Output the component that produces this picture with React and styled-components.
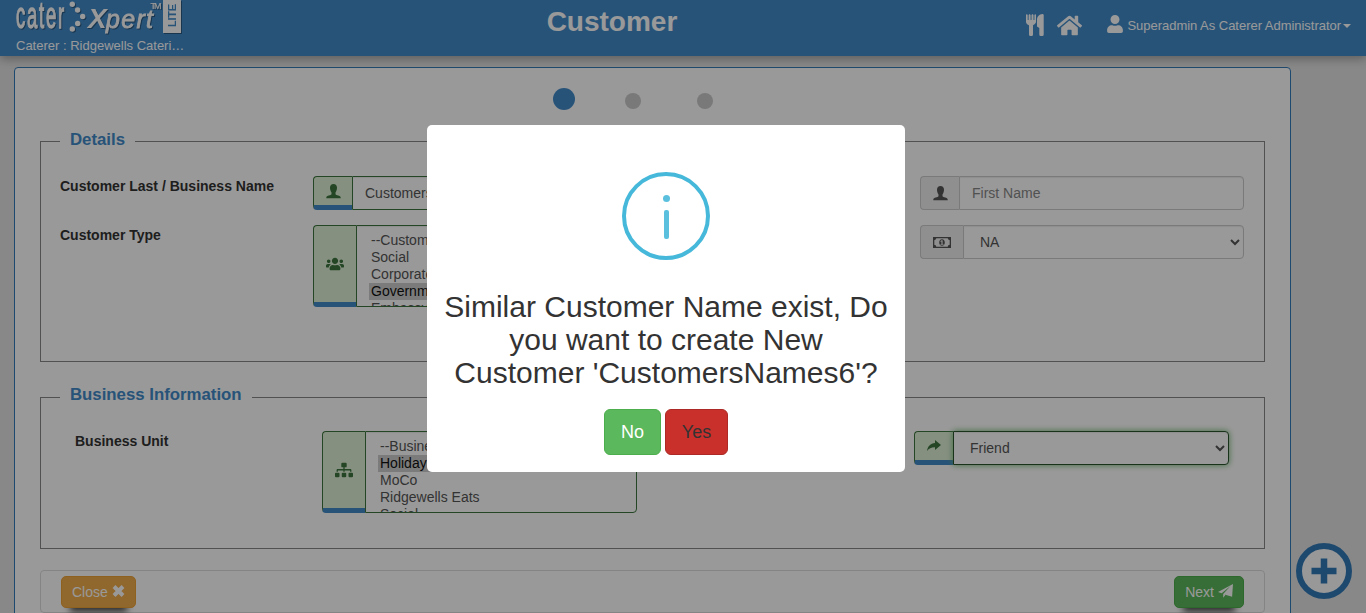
import React from "react";
import styled, { createGlobalStyle, css } from "styled-components";
import { FaHome, FaUser, FaUsers, FaSitemap } from "react-icons/fa";

const Global = createGlobalStyle`
  *, *::before, *::after { box-sizing: border-box; }
  html, body { margin: 0; height: 100%; overflow: hidden; }
  body {
    background: #e3e3e3;
    color: #333;
    font: 14px/20px "Liberation Sans", Arial, sans-serif;
  }
`;

const Page = styled.div`
  height: 613px;
  overflow: hidden;
`;

const Header = styled.header`
  position: relative;
  display: grid;
  grid-template-columns: 500px 224px 1fr;
  height: 56px;
  background: #428bca;
  color: #fff;
  box-shadow: 0 3px 9px rgba(0, 0, 0, 0.3);
`;

const Brand = styled.div`
  padding-left: 16px;
  font-size: 13px;
  line-height: 18px;
`;

const LogoSvg = styled.svg`
  display: block;
  width: 170px;
  height: 37px;
  filter: drop-shadow(1px 1px 0.6px rgba(0, 0, 0, 0.35));
`;

const Title = styled.h1`
  margin: 0;
  padding-top: 2px;
  font-size: 28px;
  line-height: 40px;
  text-align: center;
`;

const HeaderTools = styled.div`
  display: flex;
  justify-content: flex-end;
  align-items: center;
  gap: 12px;
  height: 50px;
  padding-right: 15px;
  font-size: 13px;
`;

const UserMenu = styled.div`
  display: flex;
  align-items: center;
  padding-top: 2px;
  margin-left: 12px;
  letter-spacing: -0.03px;
  white-space: nowrap;

  svg { margin: -5px 3px 0 0; }
`;

const Caret = styled.span`
  margin-left: 2px;
  border: 4px solid transparent;
  border-top-color: #fff;
  border-bottom: 0;
`;

const Panel = styled.main`
  width: 1277px;
  height: 600px;
  margin: 11px 0 0 14px;
  padding: 20px 25px 0;
  border: 1px solid #337ab7;
  border-radius: 4px;
  background: #fff;
`;

const Steps = styled.div`
  display: flex;
  align-items: flex-end;
  height: 22px;
  padding-left: 513px;
`;

const Step = styled.span`
  width: ${(p) => (p.$active ? 22 : 16)}px;
  height: ${(p) => (p.$active ? 22 : 16)}px;
  margin: ${(p) => (p.$active ? "0 50px 0 0" : "0 56px 1px 0")};
  border-radius: 50%;
  background: ${(p) => (p.$active ? "#428bca" : "#cacaca")};
`;

const Fieldset = styled.fieldset`
  height: ${(p) => p.$height}px;
  margin: ${(p) => p.$top}px 0 0;
  padding: ${(p) => p.$pad};
  border: 1px solid #888;
`;

const Legend = styled.legend`
  margin-left: ${(p) => p.$shift || 0}px;
  padding: 0 10px ${(p) => p.$drop}px;
  color: #428bca;
  font-size: 16.8px;
  font-weight: bold;
  line-height: 20px;
`;

const FieldGrid = styled.div`
  display: grid;
  grid-template-columns: ${(p) => p.$columns};
  row-gap: 15px;
  align-items: start;
`;

const Label = styled.label`
  color: #333;
  font-weight: bold;
`;

const Group = styled.div`
  display: flex;
  height: ${(p) => (p.$tall ? 82 : 34)}px;
`;

const Addon = styled.span`
  display: flex;
  flex: none;
  align-items: center;
  justify-content: center;
  width: ${(p) => (p.$wide ? 43 : 39)}px;
  border: 1px solid #ccc;
  border-right: 0;
  border-radius: 4px 0 0 4px;
  background: #eee;
  color: #555;

  ${(p) =>
    p.$valid &&
    css`
      border-color: #3c763d;
      border-bottom: 5px solid #428bca;
      background: #dff0d8;
      color: #3c763d;
    `}
`;

const control = css`
  flex: 1;
  min-width: 0;
  border: 1px solid ${(p) => (p.$focus ? "#2b542c" : p.$valid ? "#3c763d" : "#ccc")};
  border-radius: 0 4px 4px 0;
  background: #fff;
  color: #555;
  font: inherit;
  outline: 0;
  box-shadow: inset 0 1px 1px rgba(0, 0, 0, 0.075)${(p) => (p.$focus ? ", 0 0 6px #67b168" : "")};
`;

const Input = styled.input`
  ${control}
  padding: 6px 12px;
  &::placeholder { color: #888; }
`;

const Select = styled.select`
  ${control}
  padding: 6px 2px 6px 12px;
`;

const ListBox = styled.div`
  ${control}
  padding: 6px 12px 0;
  overflow: hidden;
  line-height: 17px;
`;

const ListOption = styled.div`
  padding: 0 2px;
  white-space: nowrap;
  ${(p) => p.$selected && css`background: #cecece; color: #101010;`}
`;

const Footer = styled.div`
  display: flex;
  justify-content: space-between;
  height: 43px;
  margin-top: 21px;
  padding: 5px 20px;
  border: 1px solid #ddd;
  border-radius: 4px;
`;

const Action = styled.button`
  display: flex;
  align-items: center;
  gap: 4px;
  height: 32px;
  padding: 0 10px;
  border: 1px solid ${(p) => (p.$kind === "next" ? "#4cae4c" : "#eea236")};
  border-radius: 5px;
  background: ${(p) => (p.$kind === "next" ? "#5cb85c" : "#f0ad4e")};
  color: #fff;
  font: 14px/20px "Liberation Sans", Arial, sans-serif;
  box-shadow: 0 13px 7px -9px rgba(0, 0, 0, 0.7);

  svg { margin-top: -2px; }
`;

const AddButton = styled.button`
  position: fixed;
  left: 1296px;
  top: 543px;
  display: flex;
  align-items: center;
  justify-content: center;
  width: 56px;
  height: 56px;
  padding: 0;
  border: 6px solid #337ab7;
  border-radius: 50%;
  background: #fdfdfd;
`;

const Overlay = styled.div`
  position: fixed;
  inset: 0;
  z-index: 10;
  background: rgba(0, 0, 0, 0.4);
`;

const Dialog = styled.div`
  position: fixed;
  left: 427px;
  top: 125px;
  z-index: 11;
  display: flex;
  flex-direction: column;
  align-items: center;
  width: 478px;
  height: 347px;
  padding-top: 47px;
  border-radius: 5px;
  background: #fff;
`;

const DialogText = styled.h2`
  margin: 30px 0 0;
  font-size: 30px;
  font-weight: normal;
  line-height: 33px;
  text-align: center;
  white-space: nowrap;
`;

const DialogActions = styled.div`
  display: flex;
  gap: 4px;
  margin-top: 20px;
`;

const DialogButton = styled.button`
  width: ${(p) => (p.$danger ? 63 : 57)}px;
  height: 46px;
  padding: 0;
  border: 1px solid ${(p) => (p.$danger ? "#ac2925" : "#4cae4c")};
  border-radius: 6px;
  background: ${(p) => (p.$danger ? "#c9302c" : "#5cb85c")};
  color: ${(p) => (p.$danger ? "#333" : "#fff")};
  font: 18px/24px "Liberation Sans", Arial, sans-serif;
`;

const sans = '"Liberation Sans", Arial, sans-serif';

function Logo() {
  return (
    <LogoSvg viewBox="16 0 170 37" fill="#fff" fontFamily={sans}>
      <text transform="translate(16 28) scale(.5 1)" fontSize="37" letterSpacing="3.500" stroke="#fff" strokeWidth="1.300">cater</text>
      <circle cx="72.3" cy="4.3" r="2.7" />
      <circle cx="77.6" cy="10" r="2.7" />
      <circle cx="82.7" cy="16.5" r="2.7" />
      <circle cx="77.7" cy="23.5" r="2.7" />
      <circle cx="72.3" cy="29" r="2.7" />
      <text x="88" y="28" fontSize="28" fontWeight="bold" fontStyle="italic">X</text>
      <text x="106" y="28" fontSize="25" fontStyle="italic" stroke="#fff" strokeWidth=".8" textLength="47">pert</text>
      <text x="150.500" y="8.500" fontSize="9" stroke="#fff" strokeWidth=".2" textLength="11">TM</text>
      <rect x="163" y="-2" width="18" height="35" />
      <text transform="translate(175.500 27) rotate(-90)" fontSize="11" fontWeight="bold" fill="#428bca" textLength="23">LITE</text>
    </LogoSvg>
  );
}

function Cutlery() {
  return (
    <svg width="19" height="22" viewBox="0 0 19 22" fill="#fff">
      <path d="M0 1 .8 0l.9 1v5h.9V1l1-1 1 1v5h.9V1l1-1 1 1v5h.9V1l.8-1 .8 1v7.200C9.100 10 8 10.600 7 11.200V20.500Q7 22 5.500 22h-1Q3 22 3 20.500V11.200C1.500 10.500 0 9.700 0 8ZM11 11.500V5.500C11 2.500 13.500.2 16.400 0q1.300 0 1.300.9V20.500q0 1.500-1.500 1.500h-1.400q-1.500 0-1.500-1.500v-6.500L11 12.500Z" />
    </svg>
  );
}

function Person() {
  return (
    <svg width="15" height="15" viewBox="0 0 15 15" fill="currentColor">
      <path d="M7.500 0C5.300 0 4 1.500 4 3.600c0 2 .6 3.700 1.500 4.900v1.700C5.200 11.300.3 11.300.3 13.500v.8h14.400v-.8c0-2.200-4.900-2.200-5.200-3.300V8.500C10.400 7.300 11 5.600 11 3.600 11 1.500 9.700 0 7.500 0Z" />
    </svg>
  );
}

function Money() {
  return (
    <svg width="18" height="11" viewBox="0 0 18 11" fill="currentColor">
      <path fillRule="evenodd" d="M0 0h18v11H0ZM3.300 1.300Q3.100 3 1.300 3.200v4.600q1.800.2 2 1.900h11.400q.2-1.700 2-1.900V3.200q-1.800-.2-2-1.900Z" />
      <path fillRule="evenodd" d="M9 2.200c1.900 0 2.800 1.500 2.800 3.300S10.900 8.800 9 8.800 6.200 7.300 6.200 5.500 7.100 2.200 9 2.200Zm-.4 1-1.200.9v.6l1-.3V7h-.9v.7h3V7h-.9V3.200Z" />
    </svg>
  );
}

function ShareArrow() {
  return (
    <svg width="14" height="12" viewBox="0 0 14 12" fill="currentColor">
      <path d="M8 0 14 5 8 10V7.200C4.500 7.100 2 8.200 0 11 .5 6.500 3.500 3.300 8 3Z" />
    </svg>
  );
}

function Cross() {
  return (
    <svg width="13" height="12" viewBox="0 0 13 12">
      <path d="m2 1.500 9 9m0-9-9 9" stroke="#fff" strokeWidth="4" />
    </svg>
  );
}

function Plane() {
  return (
    <svg width="15" height="14" viewBox="0 0 15 14" fill="#fff">
      <path d="M15 0 0 8l3.700 1.300L12.500 2 5.200 10v3.800L7.400 11l-.9-.6 7.600 2.300Z" />
    </svg>
  );
}

function InfoIcon() {
  return (
    <svg width="88" height="88" viewBox="0 0 88 88">
      <circle cx="44" cy="44" r="42" fill="none" stroke="#46b8da" strokeWidth="4" />
      <circle cx="44.500" cy="26.500" r="3.500" fill="#5bc0de" />
      <rect x="42" y="38" width="5" height="29" rx="2" fill="#5bc0de" />
    </svg>
  );
}

function Options({ items, selected }) {
  return (
    <ListBox $valid>
      {items.map((item) => (
        <ListOption key={item} $selected={item === selected}>{item}</ListOption>
      ))}
    </ListBox>
  );
}

export default function App() {
  return (
    <Page>
      <Global />
      <Header>
        <Brand>
          <Logo />
          Caterer : Ridgewells Cateri…
        </Brand>
        <Title>Customer</Title>
        <HeaderTools>
          <Cutlery />
          <FaHome size={25} />
          <UserMenu>
            <FaUser size={18} />
            Superadmin As Caterer Administrator
            <Caret />
          </UserMenu>
        </HeaderTools>
      </Header>

      <Panel>
        <Steps>
          <Step $active />
          <Step />
          <Step />
        </Steps>

        <Fieldset $top={20} $height={232} $pad="23px 20px 0 19px">
          <Legend $drop={3}>Details</Legend>
          <FieldGrid $columns="253px 324px 283px 324px">
            <Label>Customer Last / Business Name</Label>
            <Group>
              <Addon $valid><Person /></Addon>
              <Input $valid defaultValue="CustomersNames6" />
            </Group>
            <span />
            <Group>
              <Addon><Person /></Addon>
              <Input placeholder="First Name" />
            </Group>
            <Label>Customer Type</Label>
            <Group $tall>
              <Addon $valid $wide><FaUsers size={18} /></Addon>
              <Options
                items={["--Customer Type--", "Social", "Corporate", "Government", "Embassy"]}
                selected="Government"
              />
            </Group>
            <span />
            <Group>
              <Addon $wide><Money /></Addon>
              <Select defaultValue="NA"><option>NA</option></Select>
            </Group>
          </FieldGrid>
        </Fieldset>

        <Fieldset $top={23} $height={164} $pad="21px 35px 0 34px">
          <Legend $drop={5} $shift={-15}>Business Information</Legend>
          <FieldGrid $columns="247px 315px 277px 315px">
            <Label>Business Unit</Label>
            <Group $tall>
              <Addon $valid $wide><FaSitemap size={18} /></Addon>
              <Options
                items={["--Business Unit--", "Holiday", "MoCo", "Ridgewells Eats", "Social"]}
                selected="Holiday"
              />
            </Group>
            <span />
            <Group>
              <Addon $valid><ShareArrow /></Addon>
              <Select $valid $focus defaultValue="Friend"><option>Friend</option></Select>
            </Group>
          </FieldGrid>
        </Fieldset>

        <Footer>
          <Action $kind="close">Close <Cross /></Action>
          <Action $kind="next">Next <Plane /></Action>
        </Footer>
      </Panel>

      <AddButton aria-label="Add">
        <svg width="26" height="26" viewBox="0 0 26 26">
          <path d="M13 .5v25M.5 13h25" stroke="#337ab7" strokeWidth="6.500" />
        </svg>
      </AddButton>

      <Overlay />
      <Dialog role="dialog">
        <InfoIcon />
        <DialogText>
          Similar Customer Name exist, Do<br />
          you want to create New<br />
          Customer 'CustomersNames6'?
        </DialogText>
        <DialogActions>
          <DialogButton>No</DialogButton>
          <DialogButton $danger>Yes</DialogButton>
        </DialogActions>
      </Dialog>
    </Page>
  );
}
